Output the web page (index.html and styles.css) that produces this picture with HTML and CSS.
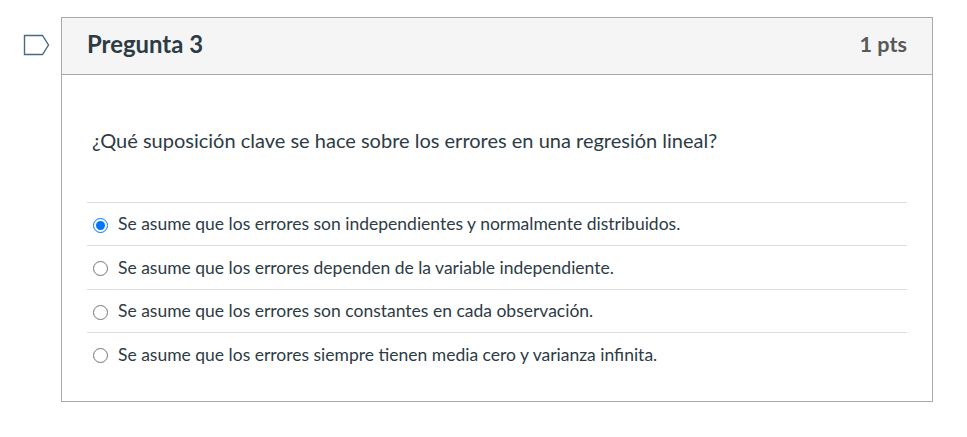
FILE: index.html
```html
<!DOCTYPE html>
<html lang="es">
<head>
<meta charset="utf-8">
<title>Pregunta 3</title>
<link rel="stylesheet" href="styles.css">
</head>
<body>
<main class="question-row">
  <svg class="flag" width="27" height="22" viewBox="0 0 27 22"><path d="M1.5 1.5H19.5L25.5 11L19.5 20.5H1.5Z"/></svg>
  <section class="question">
    <header class="header"><h1 class="name">Pregunta 3</h1><span class="points">1 pts</span></header>
    <div class="body">
      <p class="prompt">¿Qué suposición clave se hace sobre los errores en una regresión lineal?</p>
      <div class="answers">
        <label class="answer"><input class="radio" type="radio" name="a" checked><span class="text">Se asume que los errores son independientes y normalmente distribuidos.</span></label>
        <label class="answer"><input class="radio" type="radio" name="a"><span class="text">Se asume que los errores dependen de la variable independiente.</span></label>
        <label class="answer"><input class="radio" type="radio" name="a"><span class="text">Se asume que los errores son constantes en cada observación.</span></label>
        <label class="answer"><input class="radio" type="radio" name="a"><span class="text">Se asume que los errores siempre tienen media cero y varianza infinita.</span></label>
      </div>
    </div>
  </section>
</main>
</body>
</html>
```

FILE: styles.css
```css
* { box-sizing: border-box; }
body { margin: 0; background: #fff; color: #2d3b45; font-family: Lato, sans-serif; }
.question-row { display: flex; padding: 17px 34px 0 23px; }
.flag { flex: none; margin: 17px 11px 0 0; fill: none; stroke: #4a6a82; stroke-width: 1.4; }
.question { flex: 1; height: 385px; border: 1px solid #aaa; }
.header { display: flex; justify-content: space-between; height: 57px; padding: 0 25px; line-height: 52px; background: #f5f5f5; border-bottom: 1px solid #aaa; font-weight: 700; }
.name { margin: 0; font-size: 23.9px; }
.points { color: #595959; font-size: 21.6px; }
.body { padding: 49px 25px 0; }
.prompt { margin: 0 0 46px 5px; font-size: 20px; line-height: 32px; white-space: nowrap; }
.answer { display: flex; height: 43.4px; padding-left: 6px; border-top: 1px solid #ddd; font-size: 17.5px; line-height: 41px; }
.radio { flex: none; width: 15px; height: 15px; margin: 15px 10px 0 0; }
.text { white-space: nowrap; }
.answer:nth-child(even) .text { padding-top: 1px; }
```
